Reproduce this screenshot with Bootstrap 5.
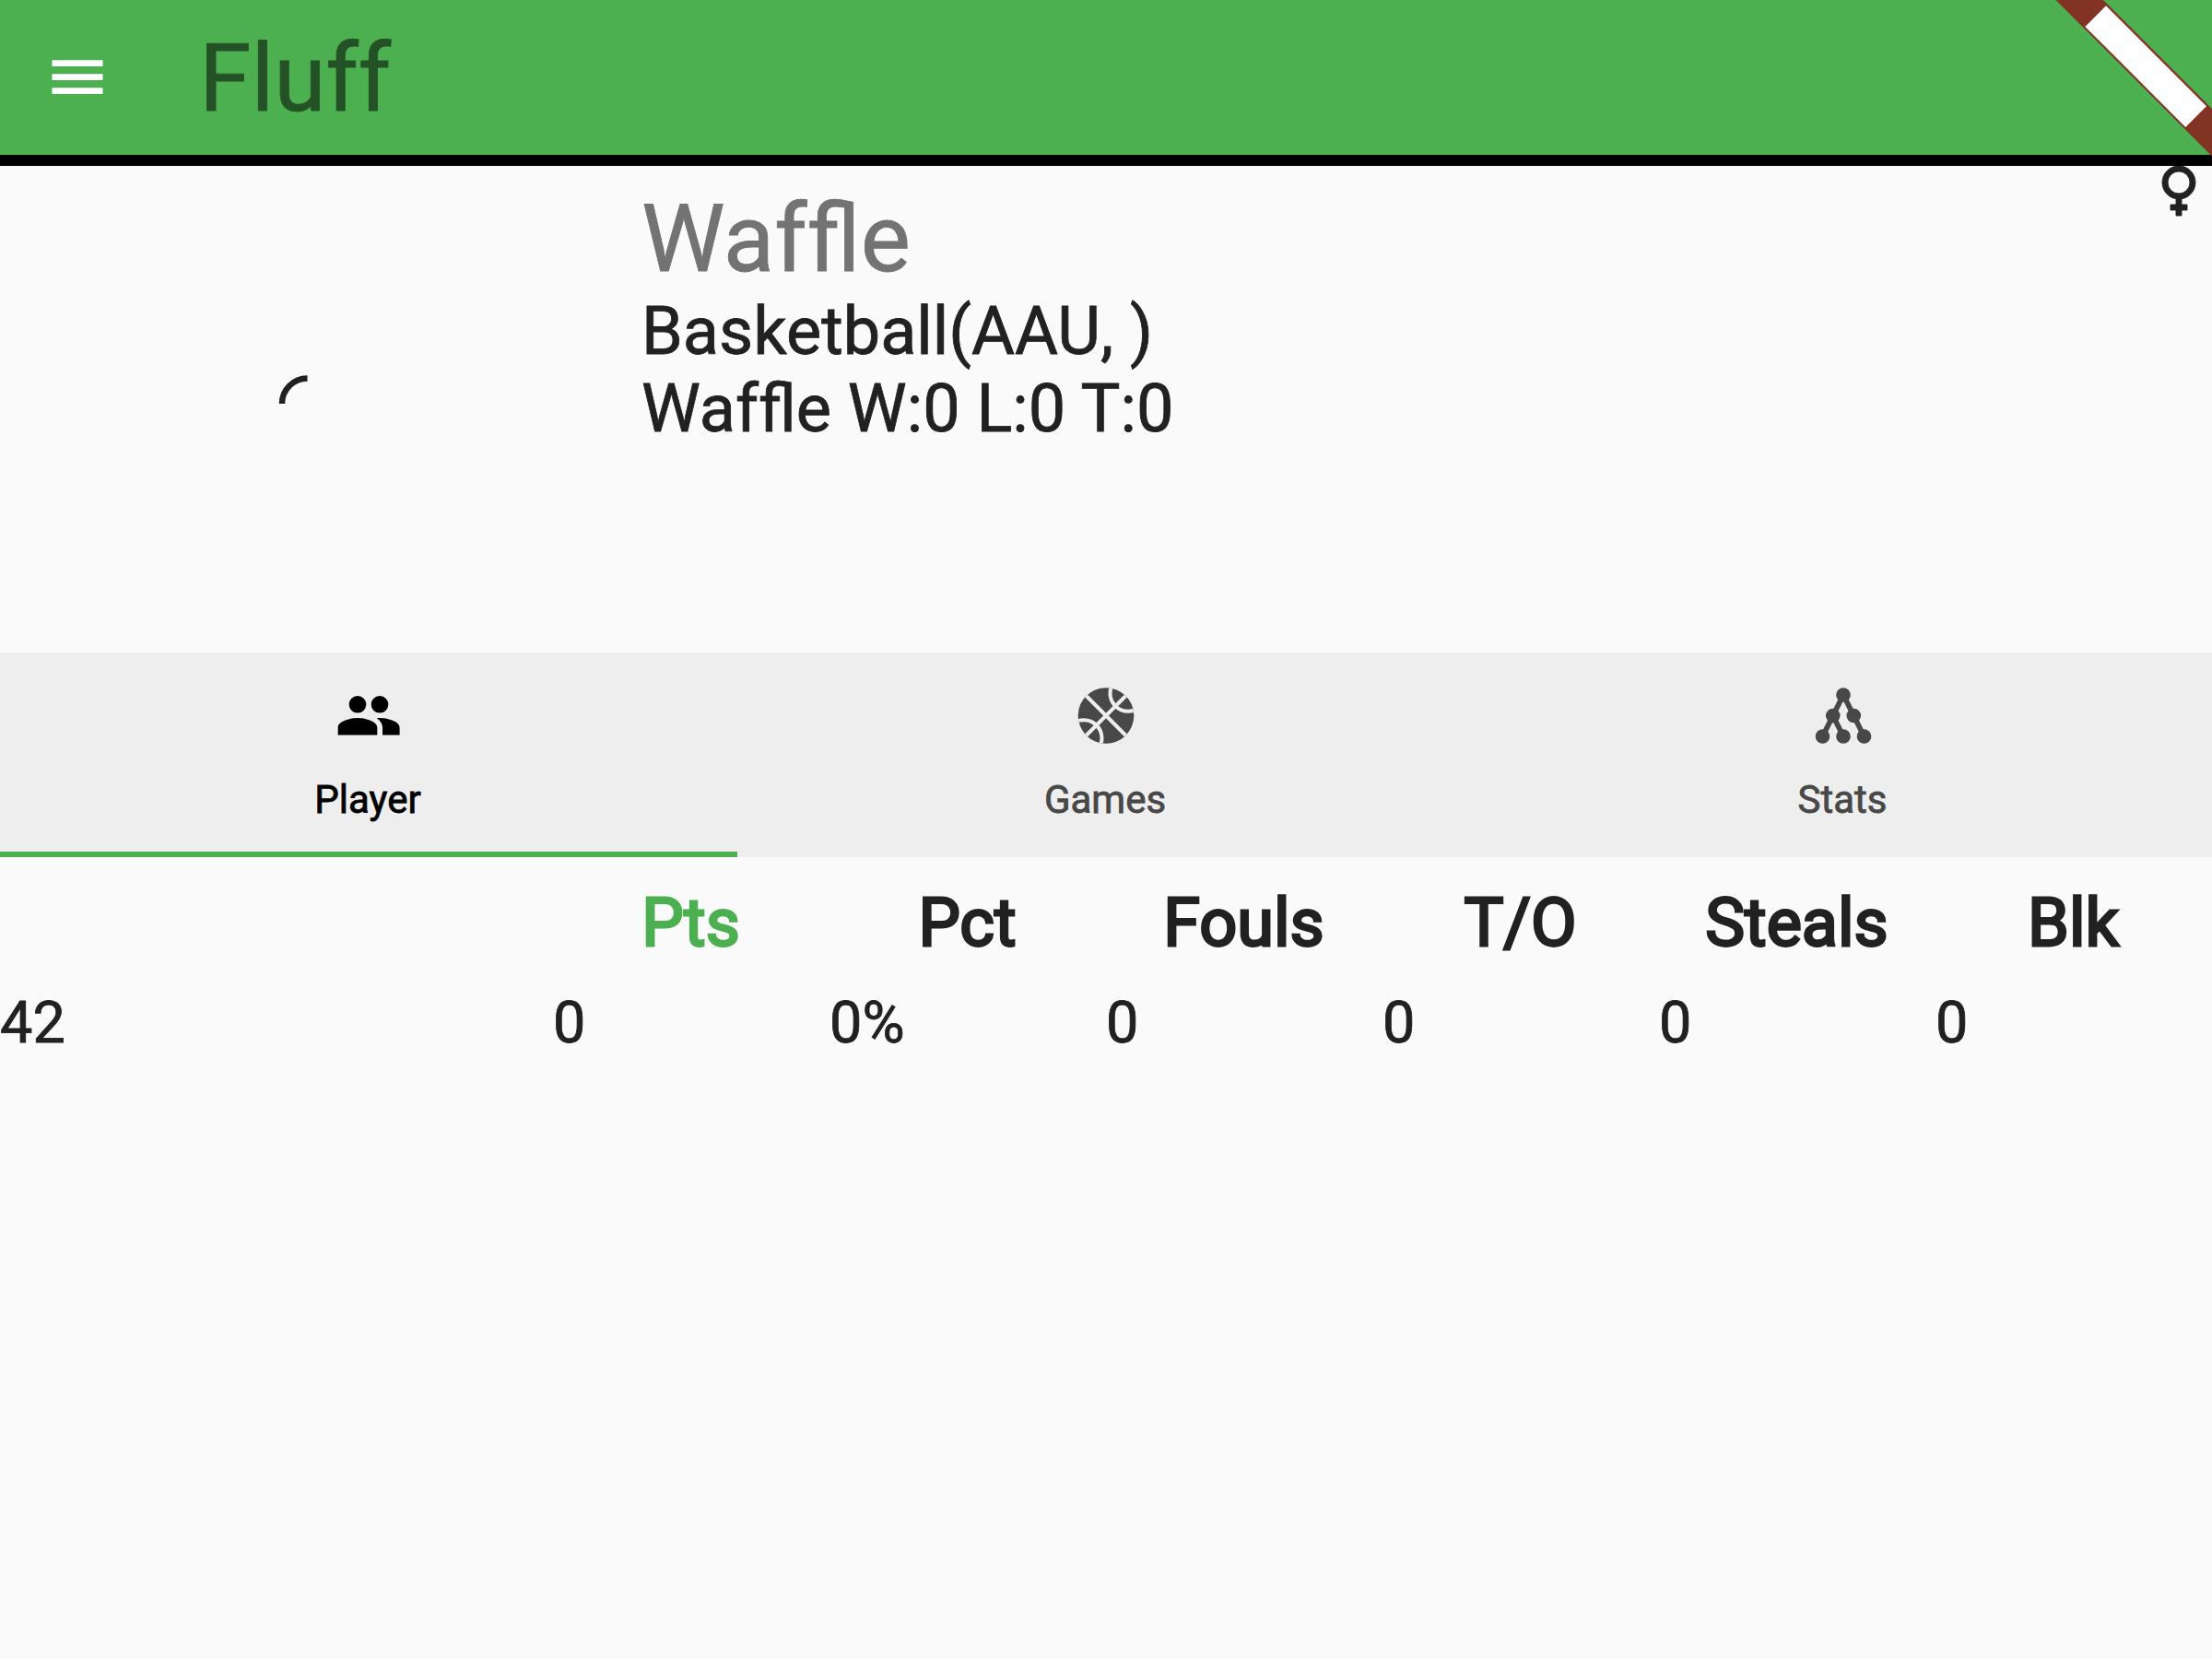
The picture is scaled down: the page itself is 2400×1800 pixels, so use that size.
<!DOCTYPE html>
<html lang="en">
<head>
<meta charset="utf-8">
<title>Fluff</title>
<link href="https://cdn.jsdelivr.net/npm/bootstrap@5.3.0/dist/css/bootstrap.min.css" rel="stylesheet">
<style>
body{font-family:Roboto,sans-serif;background:#fafafa;color:#212121;width:2400px;height:1800px;overflow:hidden;-webkit-text-stroke:.8px currentColor}
.app-bar{height:180px;background:#4caf50;border-bottom:12px solid #000;padding-left:48px}
.menu-btn{width:72px;height:72px}
.app-title{font-size:102px;line-height:120px;color:#245226;margin-left:96px;padding-top:2px}
.ribbon{width:172px;height:172px}
.team{height:528px}
.team-photo{width:696px;padding:226px 0 0 302px}
.team-name{font-size:102px;line-height:119px;color:#737373;padding-top:20px;margin-bottom:-1px}
.team-line{font-size:72px;line-height:84px}
.team-tabs{height:222px;background:#eee}
.team-tabs .nav-link{height:222px;border-radius:0;color:#484848;font-size:42px;line-height:50px;padding:32px 0 0;border-bottom:6px solid transparent}
.team-tabs .nav-link.active{color:#000;border-color:#4caf50}
.team-tabs svg{width:72px;height:72px;margin-bottom:31px}
.team-tabs span{margin-right:2px}
.stat-name{width:600px}
.stat-cell{width:300px}
.stat-head{padding-top:30px;font-size:72px;line-height:84px;-webkit-text-stroke:2.8px currentColor}
.stat-head .stat-cell{padding-right:1px}
.stat-row{padding-top:29px;font-size:63px;line-height:74px}
.sorted{color:#4caf50}
</style>
<script src="https://cdn.jsdelivr.net/npm/bootstrap@5.3.0/dist/js/bootstrap.bundle.min.js"></script>
</head>
<body>
<header class="app-bar d-flex align-items-center position-relative">
  <button class="menu-btn btn p-0 border-0 d-flex" aria-label="Menu">
    <svg width="72" height="72" viewBox="0 0 72 72" fill="#fff"><path d="M8.5 17.200h55V24h-55zM8.5 32.200h55V39h-55zM8.5 47.200h55V54h-55z"/></svg>
  </button>
  <div class="app-title">Fluff</div>
  <svg class="ribbon position-absolute top-0 end-0" viewBox="0 0 172 172"><path fill="#833323" d="M2.500 0H54L172 118V169.500z"/><path fill="#fff" d="M57 6.200 166 115.200 143.300 137.900 34.300 28.900z"/></svg>
</header>

<section class="team d-flex">
  <div class="team-photo">
    <svg class="d-block" width="62" height="62" viewBox="0 0 62 62" fill="none" stroke="#212121" stroke-width="6.500"><path d="M4 32A27.500 27.500 0 0 1 31.500 4.500"/></svg>
  </div>
  <div class="flex-grow-1">
    <div class="team-name">Waf&zwnj;fle</div>
    <div class="team-line">Basketball(AAU, )</div>
    <div class="team-line">Waf&zwnj;fle W:0 L:0 T:0</div>
  </div>
  <svg width="72" height="60" viewBox="0 4 24 20" fill="#212121" stroke="#212121" stroke-width=".3"><path d="M12 4A6 6 0 0 1 18 10C18 12.970 15.840 15.440 13 15.920V18H15V20H13V22H11V20H9V18H11V15.920C8.160 15.440 6 12.970 6 10A6 6 0 0 1 12 4M12 6A4 4 0 0 0 8 10A4 4 0 0 0 12 14A4 4 0 0 0 16 10A4 4 0 0 0 12 6Z"/></svg>
</section>

<nav class="team-tabs nav nav-justified">
  <a class="nav-link active d-flex flex-column align-items-center">
    <svg viewBox="0 -.1 24 24" fill="currentColor"><path d="M16 12.900C15.600 12.900 15.300 12.900 14.900 12.950C16.200 13.800 17 15 17 16.300V19.100H23.200V16.300C23.200 14 18.500 12.900 16 12.900M8 12.900C5.500 12.900 .9 14 .9 16.300V19.100H15.100V16.300C15.100 14 10.500 12.900 8 12.900M8 11.100A3.100 3.100 0 0 0 8 4.900A3.100 3.100 0 0 0 8 11.100M16 11.100A3.100 3.100 0 0 0 16 4.900A3.100 3.100 0 0 0 16 11.100Z"/></svg>
    <span>Player</span>
  </a>
  <a class="nav-link d-flex flex-column align-items-center">
    <svg viewBox="0 0 24 24"><defs><clipPath id="ball"><circle cx="12" cy="12.150" r="10.100"/></clipPath></defs><circle cx="12" cy="12.150" r="10.100" fill="currentColor"/><g clip-path="url(#ball)" fill="none" stroke="#eee" stroke-width="1.350"><path d="M3 3.150 21 21.150M21 3.150 3 21.150"/><circle cx="20" cy="4.100" r="6.500"/><circle cx="4" cy="20.250" r="6.500"/></g></svg>
    <span>Games</span>
  </a>
  <a class="nav-link d-flex flex-column align-items-center">
    <svg viewBox="0 0 24 24" fill="currentColor"><path d="M4.500 19.650 12 4.650 19.500 19.650M8.250 12.150 12 19.650" fill="none" stroke="currentColor" stroke-width="1.900"/><circle cx="12" cy="4.650" r="2.600"/><circle cx="8.250" cy="12.150" r="2.600"/><circle cx="15.750" cy="12.150" r="2.600"/><circle cx="4.500" cy="19.650" r="2.600"/><circle cx="12" cy="19.650" r="2.600"/><circle cx="19.500" cy="19.650" r="2.600"/></svg>
    <span>Stats</span>
  </a>
</nav>

<main>
  <div class="stat-head d-flex text-center">
    <div class="stat-name"></div>
    <div class="stat-cell sorted">Pts</div>
    <div class="stat-cell">Pct</div>
    <div class="stat-cell">Fouls</div>
    <div class="stat-cell">T/O</div>
    <div class="stat-cell">Steals</div>
    <div class="stat-cell">Blk</div>
  </div>
  <div class="stat-row d-flex">
    <div class="stat-name">42</div>
    <div class="stat-cell">0</div>
    <div class="stat-cell">0%</div>
    <div class="stat-cell">0</div>
    <div class="stat-cell">0</div>
    <div class="stat-cell">0</div>
    <div class="stat-cell">0</div>
  </div>
</main>
</body>
</html>
